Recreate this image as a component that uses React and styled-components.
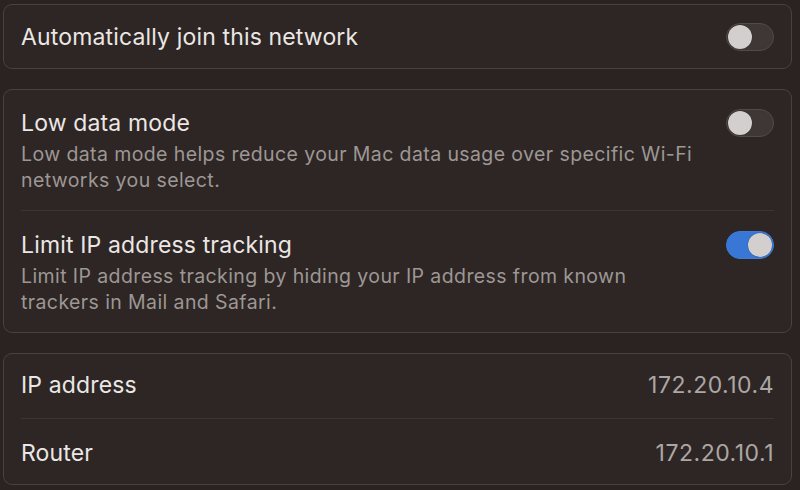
import React, { useState } from "react";
import styled, { createGlobalStyle } from "styled-components";

const GlobalStyle = createGlobalStyle`
  html, body {
    margin: 0;
    padding: 0;
    background: #2a2321;
  }
  body {
    font-family: Inter, "Noto Sans", "Liberation Sans", sans-serif;
    -webkit-font-smoothing: antialiased;
  }
`;

const Page = styled.div`
  width: 800px;
  height: 490px;
  box-sizing: border-box;
  padding: 4px 8px 0 3px;
  display: flex;
  flex-direction: column;
  gap: 20px;
  overflow: hidden;
`;

const Card = styled.section`
  background: #2d2624;
  border: 1px solid #48413f;
  border-radius: 9px;
  padding: 0 17px;
`;

const Row = styled.div`
  display: flex;
  align-items: ${(p) => (p.$top ? "flex-start" : "center")};
  justify-content: space-between;
  gap: 24px;
  padding: ${(p) => p.$pad || "17px 0"};
  & + & {
    border-top: 1px solid #3c3533;
  }
`;

const TextCol = styled.div`
  display: flex;
  flex-direction: column;
  gap: 4px;
  min-width: 0;
`;

const Title = styled.div`
  color: #ebe7e5;
  font-size: 23px;
  line-height: 28px;
  letter-spacing: 0.15px;
`;

const Desc = styled.div`
  color: #9d9795;
  font-size: 19.5px;
  line-height: 26px;
  letter-spacing: 0.4px;
  max-width: 690px;
`;

const Value = styled.div`
  color: #aca6a4;
  font-size: 23px;
  line-height: 28px;
  letter-spacing: 0.5px;
`;

const Track = styled.button`
  flex: none;
  position: relative;
  width: 48px;
  height: 28px;
  padding: 0;
  border-radius: 14px;
  border: 1px solid ${(p) => (p.$on ? "#3f7bd6" : "#524a48")};
  background: ${(p) => (p.$on ? "#3877d6" : "#3e3735")};
  cursor: pointer;
`;

const Knob = styled.span`
  position: absolute;
  top: 1px;
  left: ${(p) => (p.$on ? "21px" : "1px")};
  width: 24px;
  height: 24px;
  border-radius: 50%;
  background: #d2cfce;
  box-shadow: 0 0 1px rgba(0, 0, 0, 0.5);
`;

function Toggle({ on, onChange }) {
  return (
    <Track $on={on} onClick={() => onChange(!on)}>
      <Knob $on={on} />
    </Track>
  );
}

export default function App() {
  const [autoJoin, setAutoJoin] = useState(false);
  const [lowData, setLowData] = useState(false);
  const [limitIp, setLimitIp] = useState(true);

  return (
    <>
      <GlobalStyle />
      <Page>
        <Card>
          <Row $pad="18px 0 17px">
            <Title>Automatically join this network</Title>
            <Toggle on={autoJoin} onChange={setAutoJoin} />
          </Row>
        </Card>

        <Card>
          <Row $top $pad="19px 0 17px">
            <TextCol>
              <Title>Low data mode</Title>
              <Desc>
                Low data mode helps reduce your Mac data usage over specific
                Wi-Fi networks you select.
              </Desc>
            </TextCol>
            <Toggle on={lowData} onChange={setLowData} />
          </Row>
          <Row $top $pad="20px 0 17px">
            <TextCol>
              <Title>Limit IP address tracking</Title>
              <Desc>
                Limit IP address tracking by hiding your IP address from known
                trackers in Mail and Safari.
              </Desc>
            </TextCol>
            <Toggle on={limitIp} onChange={setLimitIp} />
          </Row>
        </Card>

        <Card>
          <Row $pad="17px 0 19px">
            <Title>IP address</Title>
            <Value>172.20.10.4</Value>
          </Row>
          <Row $pad="20px 0 17px">
            <Title>Router</Title>
            <Value>172.20.10.1</Value>
          </Row>
        </Card>
      </Page>
    </>
  );
}
